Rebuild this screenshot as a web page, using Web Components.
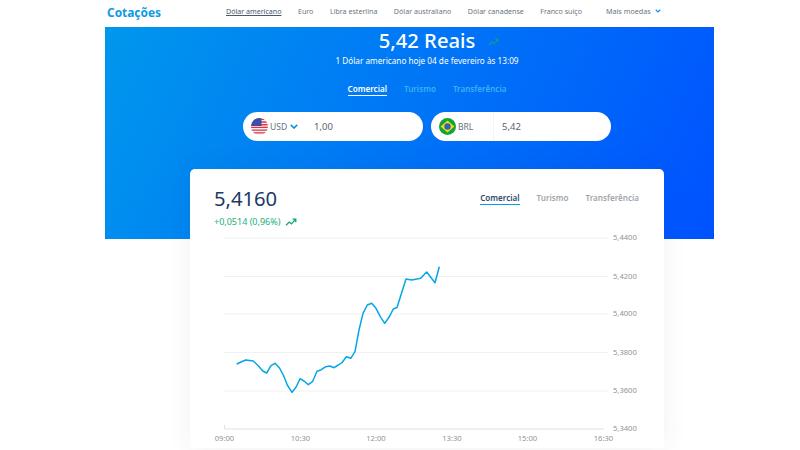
<!DOCTYPE html>
<html lang="pt-BR">
<head>
<meta charset="utf-8">
<title>Cotações</title>
<style>
  html, body { margin: 0; background: #fff; }
  body { width: 800px; height: 450px; overflow: hidden; font-family: "Noto Sans", "Open Sans", sans-serif; }
</style>
</head>
<body>
<quote-page></quote-page>

<script>
const TREND_PATH = 'M1 8 L4.5 4.5 L7 6.5 L11.5 1.5 M8.2 1.2 H11.8 V4.8';

class TopBar extends HTMLElement {
  constructor() {
    super();
    const links = ['Dólar americano', 'Euro', 'Libra esterlina', 'Dólar australiano', 'Dólar canadense', 'Franco suíço'];
    this.attachShadow({ mode: 'open' });
    this.shadowRoot.innerHTML = `
      <style>
        :host { display:flex; align-items:center; height:27px; width:609px; margin-left:105px; box-sizing:border-box; padding-left:2px; }
        .logo { font-size:11.9px; font-weight:700; color:#0b9be3; width:119px; margin-top:-3px; }
        nav { display:flex; gap:16.5px; font-size:7.1px; color:#6b7580; margin-top:-5px; }
        nav a:first-child { color:#4a586a; text-decoration:underline; }
        .more { display:flex; align-items:center; gap:4px; font-size:7.2px; color:#6b7580; margin:-5px 0 0 24px; }
      </style>
      <div class="logo">Cotações</div>
      <nav>${links.map(l => `<a>${l}</a>`).join('')}</nav>
      <div class="more">Mais moedas
        <svg width="6" height="4" viewBox="0 0 6 4"><path d="M.7.8 3 3 5.3.8" fill="none" stroke="#1593e0" stroke-width="1.2"/></svg>
      </div>
    `;
  }
}

class RateTabs extends HTMLElement {
  constructor() {
    super();
    this.attachShadow({ mode: 'open' });
    this.shadowRoot.innerHTML = `
      <style>
        :host { display:flex; gap:17px; font-size:8.1px; font-weight:600; color:var(--tab-color); }
        span { border-bottom:1px solid transparent; line-height:12px; }
        .on { color:var(--tab-active); border-bottom-color:var(--tab-line); }
      </style>
      <span class="on">Comercial</span><span>Turismo</span><span>Transferência</span>
    `;
  }
}

class CurrencyPill extends HTMLElement {
  constructor() {
    super();
    const code = this.getAttribute('code');
    const usa = code === 'USD';
    const flag = usa ? `
      <svg width="17" height="17" viewBox="0 0 17 17">
        <defs><clipPath id="c"><circle cx="8.5" cy="8.5" r="8.5"/></clipPath></defs>
        <g clip-path="url(#c)">
          <rect width="17" height="17" fill="#f4f4f6"/>
          <path d="M0 1.3H17M0 4H17M0 6.7H17M0 9.4H17M0 12.1H17M0 14.8H17" stroke="#e2333f" stroke-width="1.35"/>
          <rect width="10.5" height="8" fill="#3a4fa8"/>
        </g>
      </svg>` : `
      <svg width="17" height="17" viewBox="0 0 17 17">
        <circle cx="8.5" cy="8.5" r="8.5" fill="#12a33a"/>
        <path d="M8.5 2.6 15.4 8.5 8.5 14.4 1.6 8.5Z" fill="#f5d90f"/>
        <circle cx="8.5" cy="8.5" r="3.2" fill="#2a66b8"/>
      </svg>`;
    const chevron = usa ? `<svg class="chev" width="8" height="5" viewBox="0 0 8 5"><path d="M.8 .9 4 4 7.2 .9" fill="none" stroke="#0b93d8" stroke-width="1.6"/></svg>` : '';
    this.attachShadow({ mode: 'open' });
    this.shadowRoot.innerHTML = `
      <style>
        :host { display:flex; align-items:center; width:180px; height:29px; box-sizing:border-box; padding-left:8px; background:#fff; border-radius:15px; font-size:8.5px; color:#66707c; }
        .code { margin-left:2px; }
        .chev { margin-left:3px; }
        .pick { display:flex; align-items:center; flex:none; width:54px; height:100%; border-right:1px solid ${usa ? 'transparent' : '#f3f4f6'}; }
        .val { font-size:9.5px; color:#59636f; margin-left:8px; }
      </style>
      <div class="pick">${flag}<span class="code">${code}</span>${chevron}</div>
      <span class="val"><slot></slot></span>
    `;
  }
}

class HeroBand extends HTMLElement {
  constructor() {
    super();
    this.attachShadow({ mode: 'open' });
    this.shadowRoot.innerHTML = `
      <style>
        :host { display:flex; flex-direction:column; align-items:center; width:609px; height:212px; margin-left:105px; padding-left:35px; box-sizing:border-box; background:linear-gradient(115deg,#0097ec 0%,#0078f6 45%,#0052ff 100%); color:#fff; --tab-color:#3cb2f5; --tab-active:#fff; --tab-line:#fff; }
        .rate { position:relative; font-size:20.2px; font-weight:500; line-height:27px; }
        .rate svg { position:absolute; left:calc(100% + 13px); top:11px; }
        .sub { font-size:8.2px; line-height:12px; margin-top:1px; }
        x-rate-tabs { margin-top:16px; }
        .pills { display:flex; gap:8px; margin-top:16px; }
      </style>
      <div class="rate">5,42 Reais
        <svg width="11" height="9" viewBox="0 0 13 10"><path d="${TREND_PATH}" fill="none" stroke="#0ca08a" stroke-width="1.3"/></svg>
      </div>
      <div class="sub">1 Dólar americano hoje 04 de fevereiro às 13:09</div>
      <x-rate-tabs></x-rate-tabs>
      <div class="pills">
        <x-currency-pill code="USD">1,00</x-currency-pill>
        <x-currency-pill code="BRL">5,42</x-currency-pill>
      </div>
    `;
  }
}

class RateChart extends HTMLElement {
  constructor() {
    super();
    const pts = '236.7,364 241,362 245.7,360 253.3,361 258.3,365.7 262.7,371 266.7,373 271,365.7 275,363.3 279.3,367.7 283.3,375 287.3,385 292,392.3 296,387.3 300,378.7 304,381 308.3,384.7 312.7,381.3 317,371.3 321.3,369.7 325.7,366.7 329.7,366 334,367.7 338.3,365 342.3,362.3 346.3,356.7 350.7,358.3 355,351.7 359,330 363,313.3 367.3,305 371.7,303.3 376,308.3 380.3,316.7 384.7,323.3 389,317.3 393.3,309 397,307.5 406,279 411.7,280 420.7,278.3 426.7,272 435,282.7 439.3,266.7';
    const ys = [[238, '5,4400'], [276.5, '5,4200'], [314, '5,4000'], [352.5, '5,3800'], [391, '5,3600']];
    const xs = [[224.5, '09:00'], [300.5, '10:30'], [376, '12:00'], [452, '13:30'], [527.5, '15:00'], [603.5, '16:30']];
    // chart coordinates are page coordinates, shifted by the svg origin
    this.attachShadow({ mode: 'open' });
    this.shadowRoot.innerHTML = `
      <style>
        :host { display:block; width:474px; height:219px; }
        svg { display:block; font-family:"Noto Sans","Open Sans",sans-serif; font-size:7.6px; fill:#8f9398; }
      </style>
      <svg width="474" height="219" viewBox="190 229 474 219">
        ${ys.map(([y, t]) => `
          <line x1="224" x2="608" y1="${y}" y2="${y}" stroke="#f0f1f3"/>
          <text x="613" y="${y + 2}">${t}</text>`).join('')}
        <text x="613" y="431">5,3400</text>
        <path d="M224.5 425V429H604" fill="none" stroke="#dfe1e4"/>
        ${xs.map(([x, t]) => `<text x="${x}" y="440.5" text-anchor="middle">${t}</text>`).join('')}
        <polyline points="${pts}" fill="none" stroke="#06a6e6" stroke-width="1.5" stroke-linejoin="round"/>
      </svg>
    `;
  }
}

class QuoteCard extends HTMLElement {
  constructor() {
    super();
    this.attachShadow({ mode: 'open' });
    this.shadowRoot.innerHTML = `
      <style>
        :host { display:block; width:474px; height:279px; margin:-70px 0 0 190px; background:#fff; border-radius:5px 5px 0 0; box-shadow:0 0 26px rgba(40,60,90,.07); --tab-color:#a0a5ab; --tab-active:#2b4a70; --tab-line:#0d9be0; position:relative; }
        .head { display:flex; justify-content:space-between; align-items:flex-start; height:60px; box-sizing:border-box; padding:15px 25px 0 24px; }
        .price { font-size:20.2px; line-height:28px; color:#1c3a63; }
        .delta { display:flex; align-items:center; gap:5px; font-size:9px; line-height:12px; color:#19b07b; margin-top:4px; }
        x-rate-tabs { margin-top:8px; }
      </style>
      <div class="head">
        <div>
          <div class="price">5,4160</div>
          <div class="delta">+0,0514 (0,96%)
            <svg width="12" height="9" viewBox="0 0 13 10"><path d="${TREND_PATH}" fill="none" stroke="#14a874" stroke-width="1.5"/></svg>
          </div>
        </div>
        <x-rate-tabs></x-rate-tabs>
      </div>
      <x-rate-chart></x-rate-chart>
    `;
  }
}

class QuotePage extends HTMLElement {
  constructor() {
    super();
    this.attachShadow({ mode: 'open' });
    this.shadowRoot.innerHTML = `
      <style>:host { display:block; width:800px; height:450px; }</style>
      <x-top-bar></x-top-bar>
      <x-hero-band></x-hero-band>
      <x-quote-card></x-quote-card>
    `;
  }
}

customElements.define('x-top-bar', TopBar);
customElements.define('x-rate-tabs', RateTabs);
customElements.define('x-currency-pill', CurrencyPill);
customElements.define('x-hero-band', HeroBand);
customElements.define('x-rate-chart', RateChart);
customElements.define('x-quote-card', QuoteCard);
customElements.define('quote-page', QuotePage);
</script>
</body>
</html>
